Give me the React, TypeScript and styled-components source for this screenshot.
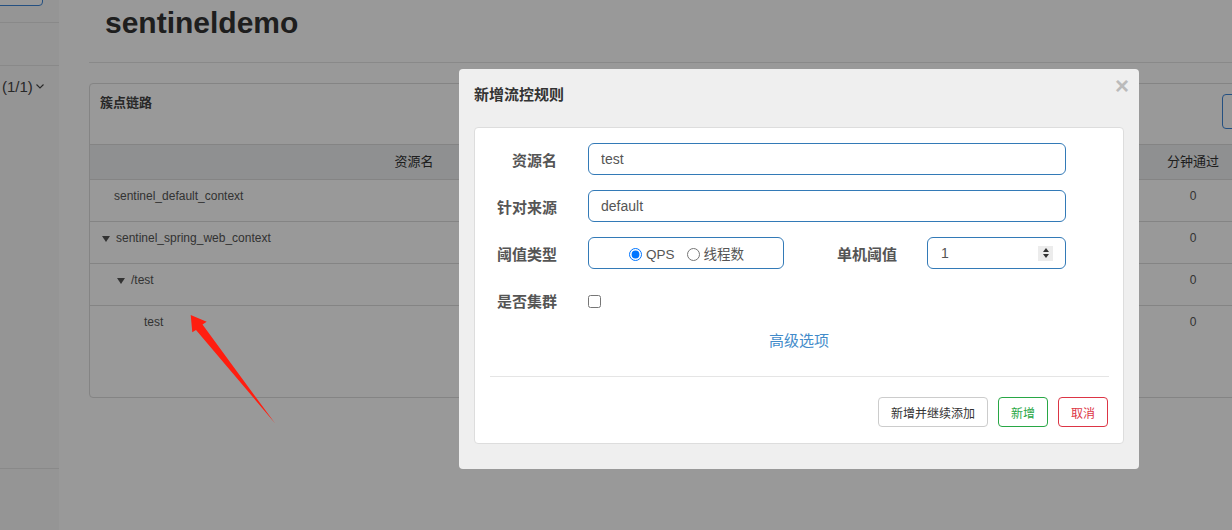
import React from "react";
import styled, { createGlobalStyle } from "styled-components";

const FONT = `"Liberation Sans", "Noto Sans CJK SC", Arial, sans-serif`;

const Global = createGlobalStyle`
  html, body { margin: 0; padding: 0; width: 1232px; height: 530px; overflow: hidden; background: #fff; }
  body { font-family: ${FONT}; color: #333; }
  * { box-sizing: border-box; }
`;

const Layout = styled.div`
  display: flex;
  width: 1500px;
  height: 530px;
  background: #fff;
`;

/* ---------- sidebar ---------- */
const Sidebar = styled.aside`
  flex: 0 0 59px;
  background: #f9f9f9;
  display: flex;
  flex-direction: column;
  overflow: hidden;
`;

const SideSection = styled.div<{ $h: number; $pt?: number }>`
  flex: none;
  height: ${(p) => p.$h}px;
  padding-top: ${(p) => p.$pt ?? 0}px;
  border-bottom: 1px solid #e4e4e4;
`;

const SideButton = styled.div`
  margin: -24px 0 0 -20px;
  width: 63px;
  height: 30px;
  border: 1px solid #3d85d8;
  border-radius: 4px;
  background: #fff;
`;

const AppPicker = styled.div`
  display: flex;
  align-items: center;
  gap: 3px;
  padding-left: 2px;
  font-size: 15px;
  line-height: 17px;
  color: #444;
  white-space: nowrap;
`;

/* ---------- main ---------- */
const Main = styled.main`
  flex: 0 0 1441px;
  padding-left: 30px;
`;

const TitleBar = styled.div`
  padding: 6px 0 23px 16px;
  border-bottom: 1px solid #e5e5e5;
`;

const Title = styled.h1`
  margin: 0;
  font: bold 30px/33px ${FONT};
  color: #333;
`;

const Panel = styled.section`
  margin-top: 20px;
  width: 1400px;
  border: 1px solid #dcdcdc;
  border-radius: 4px;
  background: #fff;
`;

const PanelHeader = styled.div`
  height: 61px;
  padding: 0 10px;
  border-bottom: 1px solid #dcdcdc;
  display: flex;
  justify-content: space-between;
  align-items: flex-start;
`;

const PanelTitle = styled.div`
  margin-top: 9px;
  font-size: 13px;
  line-height: 20px;
  font-weight: bold;
  color: #444;
`;

const Tools = styled.div`
  margin-top: 10px;
  display: flex;
  gap: 7px;
`;

const SearchBox = styled.div`
  width: 179px;
  height: 35px;
  border: 1px solid #3d85d8;
  border-radius: 4px;
  background: #fff;
`;

const ToolButton = styled.div`
  width: 70px;
  height: 35px;
  border: 1px solid #3d85d8;
  border-radius: 4px;
`;

const COLS = "648px 104px 104px 104px 104px 78px 1fr";

const HeadRow = styled.div`
  display: grid;
  grid-template-columns: ${COLS};
  height: 35px;
  background: #eef0f2;
  border-bottom: 1px solid #dcdcdc;
`;

const HeadCell = styled.div`
  text-align: center;
  font-size: 13px;
  line-height: 34px;
  color: #333;
  white-space: nowrap;
`;

const BodyRow = styled.div<{ $last?: boolean }>`
  display: grid;
  grid-template-columns: ${COLS};
  height: 42px;
  border-bottom: ${(p) => (p.$last ? "none" : "1px solid #dcdcdc")};
`;

const Cell = styled.div`
  padding: 8px 8px 6px;
  font-size: 12px;
  line-height: 17px;
  color: #555;
  text-align: center;
`;

const NameCell = styled.div<{ $indent: number }>`
  padding: 8px 8px 6px ${(p) => p.$indent}px;
  font-size: 12px;
  line-height: 17px;
  color: #555;
  display: flex;
  align-items: flex-start;
  white-space: nowrap;
`;

const Caret = styled.span`
  display: inline-block;
  width: 0;
  height: 0;
  margin: 6px 6px 0 0;
  border-left: 4.5px solid transparent;
  border-right: 4.5px solid transparent;
  border-top: 6px solid #555;
`;

const TableFooter = styled.div`
  height: 49px;
`;

/* ---------- modal ---------- */
const Backdrop = styled.div`
  position: fixed;
  inset: 0;
  background: rgba(0, 0, 0, 0.4);
  padding: 69px 0 0 459px;
  z-index: 10;
`;

const Dialog = styled.div`
  width: 680px;
  height: 400px;
  background: #efefef;
  border-radius: 4px;
  padding: 0 15px;
`;

const DialogHeader = styled.div`
  height: 58px;
  display: flex;
  justify-content: space-between;
  align-items: flex-start;
`;

const DialogTitle = styled.div`
  margin-top: 16px;
  font-size: 15px;
  line-height: 20px;
  font-weight: bold;
  color: #333;
`;

const CloseBtn = styled.span`
  margin: 10px -5px 0 0;
  font: bold 24px/14px ${FONT};
  color: #bbb;
`;

const Card = styled.div`
  height: 317px;
  background: #fff;
  border: 1px solid #ddd;
  border-radius: 4px;
  padding-top: 15px;
`;

const FormRow = styled.div<{ $mb?: number }>`
  display: flex;
  align-items: center;
  height: 32px;
  margin-bottom: ${(p) => p.$mb ?? 15}px;
`;

const Label = styled.label<{ $w: number; $gap: number }>`
  flex: none;
  width: ${(p) => p.$w}px;
  margin-right: ${(p) => p.$gap}px;
  text-align: right;
  font-size: 15px;
  line-height: 20px;
  font-weight: bold;
  color: #555;
  padding-top: 4px;
`;

const TextInput = styled.input`
  width: 478px;
  height: 32px;
  padding: 0 12px;
  border: 1px solid #337ab7;
  border-radius: 6px;
  font: 14px ${FONT};
  color: #555;
  outline: none;
`;

const RadioBox = styled.div`
  flex: none;
  width: 196px;
  height: 32px;
  border: 1px solid #337ab7;
  border-radius: 6px;
  display: flex;
  align-items: center;
  justify-content: center;
  padding: 3px 0 0 1px;
`;

const RadioLabel = styled.label<{ $gapAfter?: number }>`
  display: flex;
  align-items: center;
  gap: 4px;
  margin-right: ${(p) => p.$gapAfter ?? 0}px;
  font-size: 13.5px;
  line-height: 18px;
  color: #555;
  input { margin: 0; width: 13px; height: 13px; }
`;

const NumberField = styled.div`
  flex: none;
  width: 139px;
  height: 32px;
  border: 1px solid #337ab7;
  border-radius: 6px;
  display: flex;
  align-items: center;
  padding: 0 12px 0 13px;
  input {
    flex: 1;
    min-width: 0;
    border: none;
    outline: none;
    padding: 0;
    font: 14px ${FONT};
    color: #555;
  }
`;

const Spinner = styled.span`
  flex: none;
  width: 15px;
  height: 15px;
  background: #ececec;
  display: flex;
  flex-direction: column;
  align-items: center;
  justify-content: center;
  gap: 2px;
`;

const Tri = styled.span<{ $up?: boolean }>`
  width: 0;
  height: 0;
  border-left: 3.5px solid transparent;
  border-right: 3.5px solid transparent;
  ${(p) => (p.$up ? "border-bottom: 4px solid #333;" : "border-top: 4px solid #333;")}
`;

const Check = styled.input`
  margin: 3px 0 0 0;
  width: 13px;
  height: 13px;
`;

const AdvancedLink = styled.div`
  text-align: center;
  font-size: 15px;
  line-height: 20px;
  padding-top: 1px;
  color: #428bca;
`;

const Divider = styled.div`
  margin: 25px 14px 0 15px;
  border-top: 1px solid #e5e5e5;
`;

const ButtonBar = styled.div`
  margin-top: 20px;
  padding-right: 15px;
  display: flex;
  justify-content: flex-end;
  gap: 10px;
`;

const Btn = styled.button<{ $tone?: "default" | "success" | "danger" }>`
  height: 30px;
  padding: 0 12px;
  background: #fff;
  border-radius: 4px;
  font: 12px ${FONT};
  border: 1px solid
    ${(p) => (p.$tone === "success" ? "#28a745" : p.$tone === "danger" ? "#dc3545" : "#ccc")};
  color: ${(p) => (p.$tone === "success" ? "#28a745" : p.$tone === "danger" ? "#dc3545" : "#333")};
`;

const Annotation = styled.svg`
  position: fixed;
  left: 0;
  top: 0;
  width: 1232px;
  height: 530px;
  pointer-events: none;
  z-index: 20;
`;

const rows = [
  { name: "sentinel_default_context", indent: 24, caret: false },
  { name: "sentinel_spring_web_context", indent: 12, caret: true },
  { name: "/test", indent: 27, caret: true },
  { name: "test", indent: 54, caret: false },
];

export default function App() {
  return (
    <>
      <Global />
      <Layout>
        <Sidebar>
          <SideSection $h={23}>
            <SideButton />
          </SideSection>
          <SideSection $h={43} />
          <SideSection $h={403} $pt={12}>
            <AppPicker>
              (1/1)
              <svg width="8" height="5" viewBox="0 0 8 5">
                <polyline points="0.5,0.5 4,4 7.5,0.5" fill="none" stroke="#444" strokeWidth="1.1" />
              </svg>
            </AppPicker>
          </SideSection>
        </Sidebar>
        <Main>
          <TitleBar>
            <Title>sentineldemo</Title>
          </TitleBar>
          <Panel>
            <PanelHeader>
              <PanelTitle>簇点链路</PanelTitle>
              <Tools>
                <SearchBox />
                <ToolButton />
              </Tools>
            </PanelHeader>
            <HeadRow>
              <HeadCell>资源名</HeadCell>
              <HeadCell>通过QPS</HeadCell>
              <HeadCell>拒绝QPS</HeadCell>
              <HeadCell>并发数</HeadCell>
              <HeadCell>平均RT</HeadCell>
              <HeadCell>分钟通过</HeadCell>
              <HeadCell />
            </HeadRow>
            {rows.map((r, i) => (
              <BodyRow key={r.name} $last={i === rows.length - 1}>
                <NameCell $indent={r.indent}>
                  {r.caret && <Caret />}
                  {r.name}
                </NameCell>
                <Cell>0</Cell>
                <Cell>0</Cell>
                <Cell>0</Cell>
                <Cell>0</Cell>
                <Cell>0</Cell>
                <Cell />
              </BodyRow>
            ))}
            <TableFooter />
          </Panel>
        </Main>
      </Layout>

      <Backdrop>
        <Dialog>
          <DialogHeader>
            <DialogTitle>新增流控规则</DialogTitle>
            <CloseBtn>×</CloseBtn>
          </DialogHeader>
          <Card>
            <FormRow>
              <Label $w={82} $gap={31}>资源名</Label>
              <TextInput defaultValue="test" />
            </FormRow>
            <FormRow>
              <Label $w={82} $gap={31}>针对来源</Label>
              <TextInput defaultValue="default" />
            </FormRow>
            <FormRow>
              <Label $w={82} $gap={31}>阈值类型</Label>
              <RadioBox>
                <RadioLabel $gapAfter={12}>
                  <input type="radio" name="grade" defaultChecked />
                  QPS
                </RadioLabel>
                <RadioLabel>
                  <input type="radio" name="grade" />
                  线程数
                </RadioLabel>
              </RadioBox>
              <Label $w={113} $gap={30}>单机阈值</Label>
              <NumberField>
                <input defaultValue="1" />
                <Spinner>
                  <Tri $up />
                  <Tri />
                </Spinner>
              </NumberField>
            </FormRow>
            <FormRow $mb={14}>
              <Label $w={82} $gap={31}>是否集群</Label>
              <Check type="checkbox" />
            </FormRow>
            <AdvancedLink>高级选项</AdvancedLink>
            <Divider />
            <ButtonBar>
              <Btn>新增并继续添加</Btn>
              <Btn $tone="success">新增</Btn>
              <Btn $tone="danger">取消</Btn>
            </ButtonBar>
          </Card>
        </Dialog>
      </Backdrop>

      <Annotation viewBox="0 0 1232 530">
        <polygon
          points="190.7,315 206.7,321.7 202.5,324.5 275,423.3 196,330 192.3,332.3"
          fill="#ff1e10"
        />
      </Annotation>
    </>
  );
}
